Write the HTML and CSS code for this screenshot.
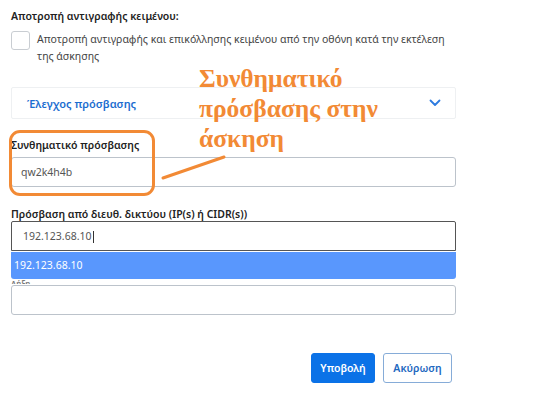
FILE: index.html
```html
<!DOCTYPE html>
<html lang="el">
<head>
    <meta charset="UTF-8">
    <meta name="viewport" content="width=device-width, initial-scale=1.0">
    <title>Ρυθμίσεις άσκησης</title>
    <link rel="stylesheet" href="styles.css">
</head>
<body>
    <div class="form">
        <div class="section-title">Αποτροπή αντιγραφής κειμένου:</div>
        <label class="check-row">
            <span class="checkbox"></span>
            <span class="check-text">Αποτροπή αντιγραφής και επικόλλησης κειμένου από την οθόνη κατά την εκτέλεση της άσκησης</span>
        </label>

        <div class="accordion">
            <span class="accordion-title">Έλεγχος πρόσβασης</span>
            <svg class="chevron" width="12" height="8" viewBox="0 0 12 8">
                <path d="M1.5 1.5 L6 6 L10.5 1.5" fill="none" stroke="#2d7be0" stroke-width="1.8" stroke-linecap="round" stroke-linejoin="round"/>
            </svg>
        </div>

        <div class="field field-password">
            <div class="field-label">Συνθηματικό πρόσβασης</div>
            <div class="input">qw2k4h4b</div>
            <div class="highlight-box"></div>
        </div>

        <div class="field field-ip">
            <div class="field-label">Πρόσβαση από διευθ. δικτύου (IP(s) ή CIDR(s))</div>
            <div class="input input-focus">192.123.68.10<span class="caret"></span></div>
            <div class="dropdown">192.123.68.10</div>
        </div>

        <div class="field field-last">
            <div class="field-label peek">Λήξη</div>
            <div class="input"></div>
        </div>

        <div class="actions">
            <button class="btn btn-primary">Υποβολή</button>
            <button class="btn btn-outline">Ακύρωση</button>
        </div>
    </div>

    <!-- annotation overlay -->
    <div class="note">Συνθηματικό πρόσβασης στην άσκηση</div>
    <svg class="note-line" width="550" height="419" viewBox="0 0 550 419">
        <line x1="163" y1="178" x2="224" y2="157" stroke="#f28a35" stroke-width="3" stroke-linecap="round"/>
    </svg>
</body>
</html>
```

FILE: styles.css
```css
* {
    margin: 0;
    padding: 0;
    box-sizing: border-box;
}

body {
    font-family: 'Noto Sans', 'DejaVu Sans', sans-serif;
    background: #fff;
    color: #2b2b2b;
    width: 550px;
    height: 419px;
    overflow: hidden;
    position: relative;
}

.form {
    width: 445px;
    margin-left: 11px;
    padding-top: 9px;
}

.section-title {
    font-size: 10.5px;
    font-weight: 600;
    line-height: 15px;
    color: #222;
}

.check-row {
    display: flex;
    align-items: flex-start;
    gap: 7px;
    margin-top: 7px;
}

.checkbox {
    flex: 0 0 19px;
    height: 19px;
    border: 1px solid #c9cdd2;
    border-radius: 3px;
}

.check-text {
    font-size: 10.5px;
    line-height: 17px;
    color: #444;
}

.accordion {
    margin-top: 22px;
    height: 32px;
    border: 1px solid #eef0f2;
    border-radius: 2px;
    display: flex;
    align-items: center;
    justify-content: space-between;
    padding: 0 14px 0 15px;
}

.accordion-title {
    font-size: 11px;
    font-weight: 600;
    color: #1c6dd0;
}

.chevron {
    margin-top: -1px;
}

.field {
    position: relative;
}

.field-label {
    font-size: 10.5px;
    font-weight: 600;
    line-height: 14px;
    color: #222;
}

.field-password {
    margin-top: 19px;
}

.field-password .field-label {
    margin-bottom: 5px;
}

.field-ip {
    margin-top: 20px;
}

.field-last {
    margin-top: 29px;
}

.field-label.peek {
    font-size: 8px;
    line-height: 8px;
    height: 4px;
    margin-bottom: 1px;
    color: #777;
    overflow: hidden;
}

.input {
    height: 30px;
    border: 1px solid #bcc3cb;
    border-radius: 3px;
    padding: 0 9px;
    font-size: 10.5px;
    line-height: 28px;
    color: #555;
}

.input-focus {
    border-color: #555;
    border-radius: 2px 2px 0 0;
    padding-left: 11px;
}

.caret {
    display: inline-block;
    width: 1px;
    height: 12px;
    background: #333;
    vertical-align: middle;
    margin-left: 1px;
}

.dropdown {
    position: absolute;
    left: 0;
    right: 0;
    top: 45px;
    height: 27px;
    z-index: 2;
    background: #5997fd;
    color: #fff;
    font-size: 10.5px;
    line-height: 27px;
    padding-left: 3px;
    border-radius: 0 0 3px 3px;
}

.highlight-box {
    position: absolute;
    left: -2px;
    top: -8px;
    width: 146px;
    height: 66px;
    border: 3px solid #f28a35;
    border-radius: 11px;
}

.actions {
    display: flex;
    justify-content: flex-end;
    gap: 8px;
    margin-top: 38px;
    padding-right: 4px;
}

.btn {
    height: 30px;
    border-radius: 3px;
    font-family: inherit;
    font-size: 10.5px;
    font-weight: 600;
    padding: 0 8px;
    cursor: pointer;
}

.btn-primary {
    width: 64px;
    background: #0b72e7;
    border: 1px solid #0b72e7;
    color: #fff;
}

.btn-outline {
    width: 69px;
    background: #fff;
    border: 1px solid #86acd8;
    color: #1e68bf;
}

.note {
    position: absolute;
    left: 199px;
    top: 64px;
    width: 200px;
    font-family: 'Liberation Serif', 'Times New Roman', serif;
    font-weight: bold;
    font-size: 25.5px;
    line-height: 30px;
    color: #f28a35;
}

.note-line {
    position: absolute;
    left: 0;
    top: 0;
    pointer-events: none;
}
```
